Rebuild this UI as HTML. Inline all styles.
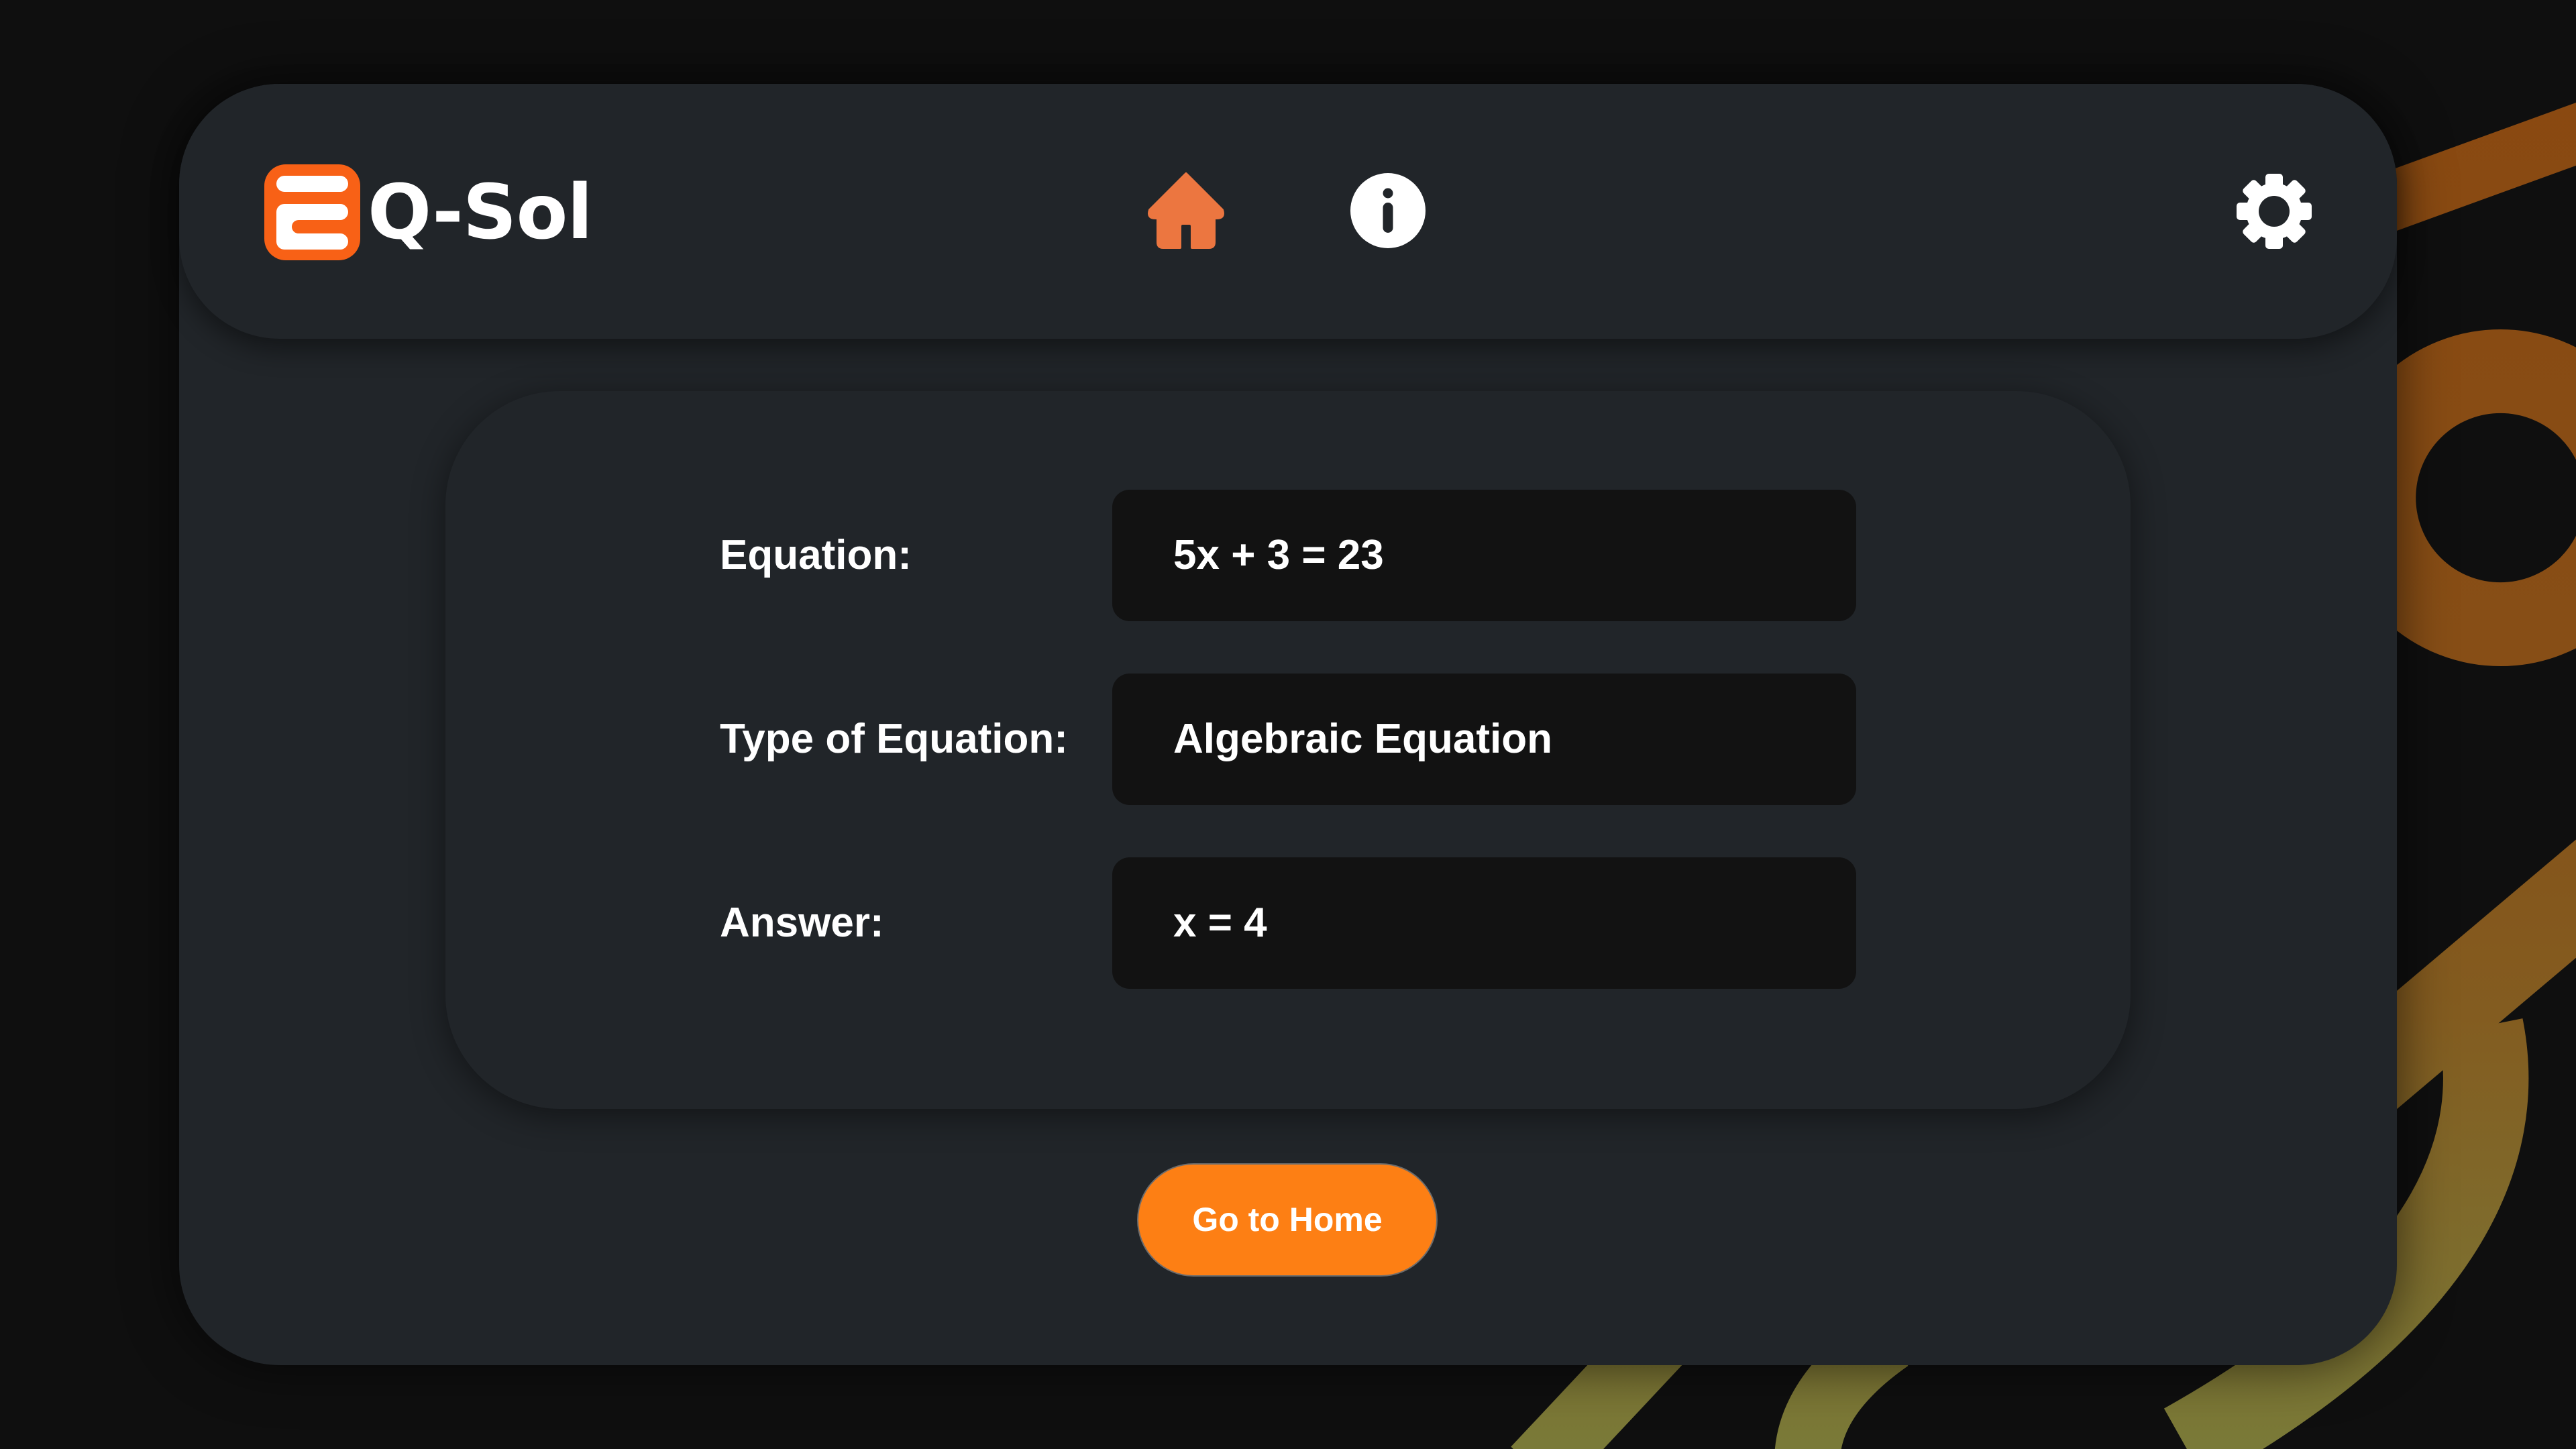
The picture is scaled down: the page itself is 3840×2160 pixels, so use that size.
<!DOCTYPE html>
<html><head><meta charset="utf-8"><style>
html,body{margin:0;padding:0;width:3840px;height:2160px;overflow:hidden;background:#0f0f0f;font-family:"Liberation Sans",sans-serif;}
.bg{position:absolute;left:0;top:0;width:3840px;height:2160px}
.card{position:absolute;left:267px;top:125px;width:3306px;height:1910px;background:#212529;border-radius:150px;box-shadow:0 0 80px rgba(0,0,0,.6);}
.header{position:absolute;left:267px;top:125px;width:3306px;height:380px;background:#212529;border-radius:150px;box-shadow:0 14px 40px rgba(0,0,0,.45);}
.logo{position:absolute;left:394px;top:245px;width:143px;height:143px}
.brand{position:absolute;left:548px;top:242px;font-family:"DejaVu Sans",sans-serif;font-weight:bold;font-size:112px;color:#fff;line-height:150px;letter-spacing:-1px}
.inner{position:absolute;left:664px;top:583px;width:2512px;height:1070px;background:#212529;border-radius:170px;box-shadow:0 10px 50px rgba(0,0,0,.45);}
.lbl{position:absolute;left:1073px;font-size:62px;font-weight:bold;color:#fff;line-height:196px}
.fld{position:absolute;left:1658px;width:1109px;height:196px;background:#121212;border-radius:26px;}
.fld span{position:absolute;left:91px;font-size:62px;font-weight:bold;color:#fff;line-height:196px}
.btn{position:absolute;left:1695px;top:1734px;width:448px;height:169px;background:#fd7f14;border:2px solid #6c6c6c;border-radius:85px;box-sizing:border-box;color:#fff;font-weight:bold;font-size:50px;text-align:center;line-height:165px}
</style></head><body>
<svg class="bg" viewBox="0 0 1568 882" preserveAspectRatio="none">
<defs><linearGradient id="g" gradientUnits="userSpaceOnUse" x1="0" y1="0" x2="0" y2="882"><stop offset="0" stop-color="#8a4810"/><stop offset=".45" stop-color="#874e16"/><stop offset=".7" stop-color="#835c20"/><stop offset="1" stop-color="#7a7a38"/></linearGradient></defs>
<g fill="none" stroke="url(#g)" stroke-linecap="butt">
<path d="M1380 150 L1600 70" stroke-width="36"/>
<circle cx="1522" cy="303" r="77" stroke-width="51"/>
<path d="M1600 520 L1420 672" stroke-width="55"/>
<path d="M1510 625 C1525 700 1490 790 1330 880" stroke-width="52"/>
<path d="M935 895 L1010 815" stroke-width="42"/>
<path d="M1100 890 Q1100 850 1150 815" stroke-width="40"/>
</g></svg>
<div class="card"></div>
<div class="header"></div>
<svg class="logo" viewBox="0 0 143 143"><rect x="0" y="0" width="143" height="143" rx="32" fill="#f86116"/><rect x="18" y="17" width="107" height="24" rx="12" fill="#fff"/><path d="M30 59 H113 a12 12 0 0 1 0 24 H51 a10 10 0 0 0 0 20 H113 a12 12 0 0 1 0 24 H30 a12 12 0 0 1 -12 -12 V71 a12 12 0 0 1 12 -12 Z" fill="#fff"/></svg>
<div class="brand">Q-Sol</div>
<svg style="position:absolute;left:1710px;top:257px" width="116" height="116" viewBox="0 0 116 116"><path d="M58 2 L112 56 Q116 68 104 68 L100 68 L100 104 Q100 112 92 112 L67 112 L67 80 Q67 76 63 76 L53 76 Q49 76 49 80 L49 112 L24 112 Q16 112 16 104 L16 68 L12 68 Q0 68 4 56 Z" fill="#ec7640" stroke="#ec7640" stroke-width="4" stroke-linejoin="round"/></svg>
<svg style="position:absolute;left:2012px;top:257px" width="114" height="114" viewBox="0 0 114 114"><circle cx="57" cy="57" r="56" fill="#fff"/><circle cx="57" cy="31" r="7.5" fill="#212529"/><rect x="49.5" y="45" width="15" height="45" rx="7.5" fill="#212529"/></svg>
<svg style="position:absolute;left:3332px;top:257px" width="116" height="116" viewBox="-58 -58 116 116"><g fill="#fff"><circle r="42"/><g id="t"><rect x="-13" y="-56" width="26" height="26" rx="5"/></g><use href="#t" transform="rotate(45)"/><use href="#t" transform="rotate(90)"/><use href="#t" transform="rotate(135)"/><use href="#t" transform="rotate(180)"/><use href="#t" transform="rotate(225)"/><use href="#t" transform="rotate(270)"/><use href="#t" transform="rotate(315)"/></g><circle r="23" fill="#212529"/></svg>
<div class="inner"></div>
<div class="lbl" style="top:730px">Equation:</div>
<div class="fld" style="top:730px"><span>5x + 3 = 23</span></div>
<div class="lbl" style="top:1004px">Type of Equation:</div>
<div class="fld" style="top:1004px"><span>Algebraic Equation</span></div>
<div class="lbl" style="top:1278px">Answer:</div>
<div class="fld" style="top:1278px"><span>x = 4</span></div>
<div class="btn">Go to Home</div>
</body></html>
